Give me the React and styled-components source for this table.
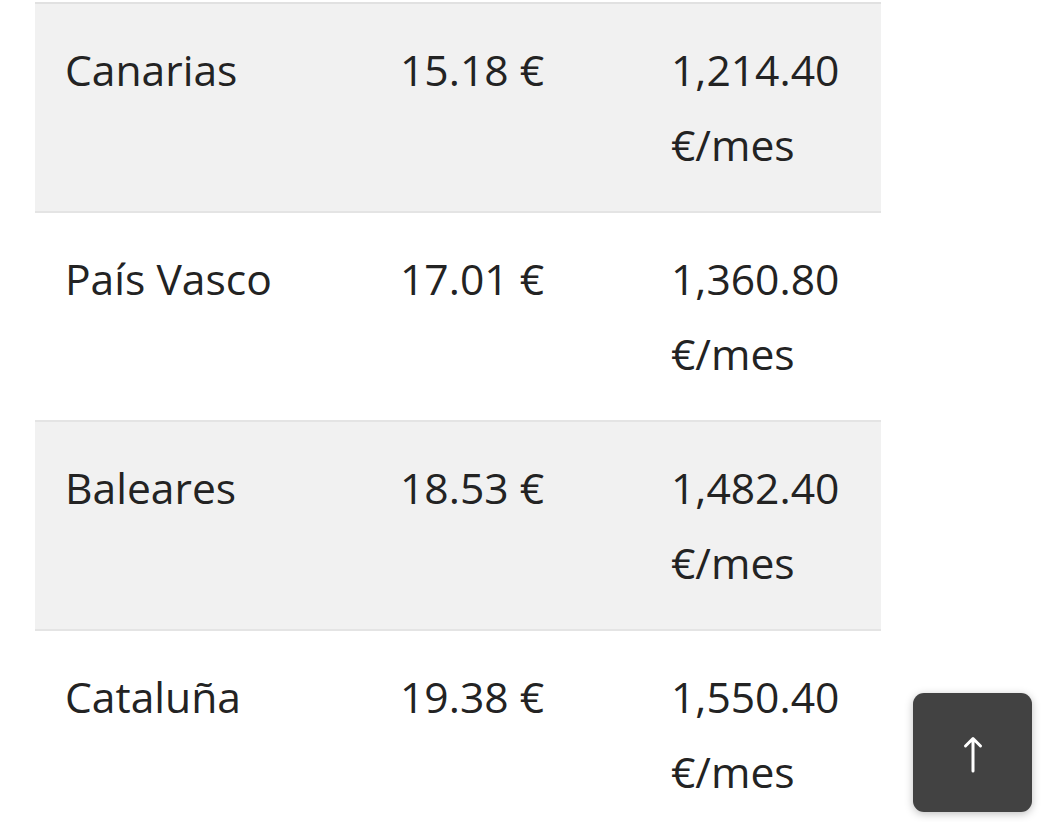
import React from "react";
import styled, { createGlobalStyle } from "styled-components";

const Global = createGlobalStyle`
  html, body {
    margin: 0;
    padding: 0;
    background: #ffffff;
    overflow: hidden;
  }
  body {
    font-family: "Open Sans", "Noto Sans", sans-serif;
    color: #252525;
  }
`;

const Page = styled.div`
  padding: 2px 169px 0 35px;
`;

const Table = styled.table`
  width: 846px;
  border-collapse: collapse;
  table-layout: fixed;
  border-top: 2px solid #e1e1e1;
`;

const Row = styled.tr`
  background: ${(p) => (p.$striped ? "#f1f1f1" : "#ffffff")};
  border-bottom: 2px solid #e4e4e4;
`;

const Cell = styled.td`
  padding: 28px 30px 29px 30px;
  vertical-align: top;
  font-size: 42.6px;
  line-height: 75px;
  font-weight: 400;
  color: #232323;
  letter-spacing: 0;
`;

const TopButton = styled.button`
  position: fixed;
  right: 18px;
  bottom: 10px;
  width: 119px;
  height: 119px;
  border: none;
  border-radius: 11px;
  background: #424242;
  box-shadow: 0 2px 8px rgba(0, 0, 0, 0.25);
  display: flex;
  align-items: center;
  justify-content: center;
  padding: 0;
  cursor: pointer;
`;

const rows = [
  ["Canarias", "15.18 €", "1,214.40 €/mes"],
  ["País Vasco", "17.01 €", "1,360.80 €/mes"],
  ["Baleares", "18.53 €", "1,482.40 €/mes"],
  ["Cataluña", "19.38 €", "1,550.40 €/mes"],
];

export default function App() {
  return (
    <>
      <Global />
      <Page>
        <Table>
          <colgroup>
            <col style={{ width: 335 }} />
            <col style={{ width: 271 }} />
            <col style={{ width: 240 }} />
          </colgroup>
          <tbody>
            {rows.map((r, i) => (
              <Row key={r[0]} $striped={i % 2 === 0}>
                <Cell>{r[0]}</Cell>
                <Cell>{r[1]}</Cell>
                <Cell>{r[2]}</Cell>
              </Row>
            ))}
          </tbody>
        </Table>
      </Page>
      <TopButton aria-label="Volver arriba">
        <svg width="20" height="40" viewBox="0 0 20 40" fill="none">
          <path
            d="M10 38V6M2.5 13L10 5.5L17.5 13"
            stroke="#ffffff"
            strokeWidth="3"
            strokeLinecap="round"
            strokeLinejoin="round"
          />
        </svg>
      </TopButton>
    </>
  );
}
